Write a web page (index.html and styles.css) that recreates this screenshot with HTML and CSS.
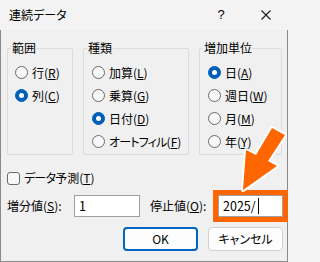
FILE: index.html
```html
<!DOCTYPE html>
<html lang="ja">
<head>
<meta charset="utf-8">
<link rel="stylesheet" href="styles.css">
</head>
<body>
<div class="window">
  <div class="titlebar">
    <span class="title">連続データ</span>
    <span class="help">?</span>
    <svg class="close" width="10" height="10" viewBox="0 0 10 10"><path d="M0.5 0.5L9.5 9.5M9.5 0.5L0.5 9.5" stroke="#1a1a1a" stroke-width="1.1" fill="none"/></svg>
  </div>
  <div class="content">
    <div class="groups">
      <fieldset class="group g1">
        <legend>範囲</legend>
        <div class="opts">
          <div class="opt"><span class="radio"></span><span>行(<u>R</u>)</span></div>
          <div class="opt"><span class="radio on"></span><span>列(<u>C</u>)</span></div>
        </div>
      </fieldset>
      <fieldset class="group g2">
        <legend>種類</legend>
        <div class="opts">
          <div class="opt"><span class="radio"></span><span>加算(<u>L</u>)</span></div>
          <div class="opt"><span class="radio"></span><span>乗算(<u>G</u>)</span></div>
          <div class="opt"><span class="radio on"></span><span>日付(<u>D</u>)</span></div>
          <div class="opt"><span class="radio"></span><span><span class="tight">オートフィル</span>(<u>F</u>)</span></div>
        </div>
      </fieldset>
      <fieldset class="group g3">
        <legend>増加単位</legend>
        <div class="opts">
          <div class="opt"><span class="radio on"></span><span>日(<u>A</u>)</span></div>
          <div class="opt"><span class="radio"></span><span>週日(<u>W</u>)</span></div>
          <div class="opt"><span class="radio"></span><span>月(<u>M</u>)</span></div>
          <div class="opt"><span class="radio"></span><span>年(<u>Y</u>)</span></div>
        </div>
      </fieldset>
    </div>
    <div class="check-row"><span class="checkbox"></span><span><span class="tight">データ</span>予測(<u>T</u>)</span></div>
    <div class="input-row">
      <span class="lbl lbl1">増分値(<u>S</u>):</span>
      <span class="field f1">1</span>
      <span class="lbl lbl2">停止値(<u>O</u>):</span>
      <span class="field f2">2025/<span class="caret"></span></span>
    </div>
    <div class="btn-row">
      <span class="btn ok">OK</span>
      <span class="btn">キャンセル</span>
    </div>
  </div>
  <svg class="arrow" width="289" height="262" viewBox="0 0 289 262">
    <polygon points="243,190 246,150 256,155 272,128 285,135 268,161 277,166" fill="#ff6600" stroke="#ffffff" stroke-width="4" stroke-linejoin="round" paint-order="stroke"/>
  </svg>
</div>
</body>
</html>
```

FILE: styles.css
```css
html, body {
  margin: 0;
  padding: 0;
  background: #f3f3f3;
}

body {
  font-family: "Noto Sans CJK JP", "Noto Sans", sans-serif;
  font-size: 12px;
  color: #000000;
  font-feature-settings: "palt";
}

.window {
  position: relative;
  width: 288px;
  height: 262px;
}

.titlebar {
  height: 30px;
  background: #f3f3f3;
  display: flex;
  align-items: center;
}

.title {
  padding-left: 9px;
  font-size: 12px;
  line-height: 16px;
}

.help {
  margin-left: auto;
  width: 10px;
  text-align: center;
  font-size: 13px;
  line-height: 16px;
  margin-right: 35px;
  font-family: "Liberation Sans", sans-serif;
}

.close {
  display: block;
  margin-right: 17px;
}

.content {
  height: 232px;
  box-sizing: border-box;
  background: #f0f0f0;
  border: 1px solid #8a8a8a;
  border-top: none;
  padding: 10px 5px 0 6px;
}

.groups {
  display: flex;
  gap: 10px;
  align-items: stretch;
}

.group {
  margin: 0;
  padding: 0;
  border: 1px solid #dcdcdc;
  border-radius: 2px;
  box-sizing: border-box;
  min-width: 0;
}

.group legend {
  margin-left: 3px;
  padding: 0 1px;
  line-height: 16px;
  font-size: 12px;
}

.g1 { width: 66px; }
.g2 { width: 106px; }
.g3 { width: 83px; }

.opts {
  padding: 5px 0 1px 7px;
}

.g2 .opts, .g3 .opts {
  padding-left: 8px;
}

.opt {
  height: 23px;
  display: flex;
  align-items: center;
  gap: 4px;
  white-space: nowrap;
  line-height: 16px;
}

.tight {
  letter-spacing: -0.8px;
}

u {
  text-decoration: underline;
  text-underline-offset: 1px;
  text-decoration-thickness: 1px;
}

.radio {
  width: 13px;
  height: 13px;
  box-sizing: border-box;
  border-radius: 50%;
  border: 1px solid #6b6b6b;
  background: #f8f8f8;
  flex: none;
  display: flex;
  align-items: center;
  justify-content: center;
}

.radio.on {
  border-color: #005fb8;
  background: #005fb8;
}

.radio.on::after {
  content: "";
  width: 5px;
  height: 5px;
  border-radius: 50%;
  background: #ffffff;
}

.check-row {
  margin-top: 15px;
  height: 16px;
  display: flex;
  align-items: center;
  gap: 4px;
  line-height: 16px;
}

.checkbox {
  width: 13px;
  height: 13px;
  box-sizing: border-box;
  border: 1px solid #6b6b6b;
  border-radius: 3px;
  background: #f8f8f8;
  flex: none;
}

.input-row {
  margin-top: 9px;
  height: 22px;
  display: flex;
  align-items: center;
  line-height: 16px;
}

.lbl {
  flex: none;
  white-space: nowrap;
}

.lbl1 { width: 67px; }
.lbl2 { width: 68px; margin-left: 10px; }

.field {
  flex: none;
  height: 22px;
  box-sizing: border-box;
  background: #ffffff;
  border: 1px solid #a0a0a0;
  padding: 2px 4px;
  display: flex;
  align-items: center;
  font-size: 12.5px;
  color: #000;
}

.f1 { width: 66px; }
.f2 {
  width: 65px;
  outline: 5px solid #ff6600;
}

.caret {
  display: inline-block;
  width: 1px;
  height: 16px;
  background: #000;
  margin-left: 2px;
}

.btn-row {
  margin-top: 10px;
  display: flex;
  justify-content: flex-end;
  gap: 10px;
  margin-right: -1px;
}

.btn {
  width: 75px;
  height: 24px;
  box-sizing: border-box;
  border: 1px solid #d0d0d0;
  border-radius: 4px;
  background: #fdfdfd;
  display: flex;
  align-items: center;
  justify-content: center;
  line-height: 16px;
}

.btn.ok {
  border: 2px solid #0067c0;
}

.arrow {
  position: absolute;
  left: 0;
  top: 0;
  pointer-events: none;
}
```
